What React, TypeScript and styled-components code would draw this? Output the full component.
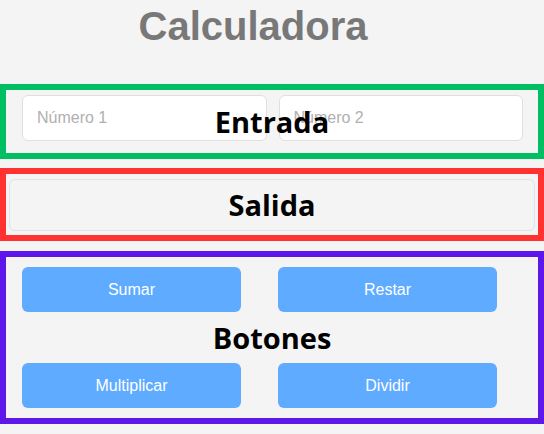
import styled, { createGlobalStyle } from "styled-components";

const GlobalStyle = createGlobalStyle`
  html, body {
    margin: 0;
    padding: 0;
    background: #f4f4f4;
  }
  * {
    box-sizing: border-box;
  }
`;

const Page = styled.div`
  width: 544px;
  display: flex;
  flex-direction: column;
  font-family: "Liberation Sans", Arial, sans-serif;
`;

const Title = styled.h1`
  margin: 3px 0 0;
  padding-right: 38px;
  text-align: center;
  font-size: 40px;
  line-height: 46px;
  font-weight: 700;
  color: #787878;
`;

const Section = styled.section<{ $color: string; $top: number }>`
  position: relative;
  margin-top: ${(p) => p.$top}px;
  border: 6px solid ${(p) => p.$color};
`;

const Label = styled.span`
  position: absolute;
  inset: 0;
  display: flex;
  align-items: center;
  justify-content: center;
  font-family: "Open Sans", "Noto Sans", sans-serif;
  font-weight: 700;
  font-size: 29px;
  color: #000;
  pointer-events: none;
`;

const InputRow = styled.div`
  display: grid;
  grid-template-columns: 1fr 1fr;
  column-gap: 12px;
  padding: 5px 15px 12px 16px;
`;

const NumberInput = styled.input`
  height: 46px;
  padding: 0 14px;
  border: 1px solid #e0e0e0;
  border-radius: 6px;
  background: #fff;
  font-family: "Liberation Sans", Arial, sans-serif;
  font-size: 16px;
  color: #333;
  outline: none;

  &::placeholder {
    color: #b0b0b0;
  }
`;

const Output = styled.div`
  height: 52px;
  margin: 5px 3px 4px;
  border: 1px solid #e2e2e2;
  border-radius: 6px;
  background: #f4f4f4;
`;

const ButtonGrid = styled.div`
  display: grid;
  grid-template-columns: 219px 219px;
  column-gap: 37px;
  row-gap: 51px;
  padding: 10px 16px;
`;

const OpButton = styled.button`
  height: 45px;
  border: none;
  border-radius: 6px;
  background: #5fabff;
  color: #fff;
  font-family: "Liberation Sans", Arial, sans-serif;
  font-size: 16px;
  cursor: pointer;
`;

const operations = ["Sumar", "Restar", "Multiplicar", "Dividir"];

const App = () => {
  return (
    <Page>
      <GlobalStyle />
      <Title>Calculadora</Title>

      <Section $color="#00bf63" $top={35}>
        <InputRow>
          <NumberInput type="number" placeholder="Número 1" />
          <NumberInput type="number" placeholder="Número 2" />
        </InputRow>
        <Label>Entrada</Label>
      </Section>

      <Section $color="#ff3131" $top={9}>
        <Output />
        <Label>Salida</Label>
      </Section>

      <Section $color="#5e17eb" $top={10}>
        <ButtonGrid>
          {operations.map((op) => (
            <OpButton key={op}>{op}</OpButton>
          ))}
        </ButtonGrid>
        <Label>Botones</Label>
      </Section>
    </Page>
  );
};

export default App;
